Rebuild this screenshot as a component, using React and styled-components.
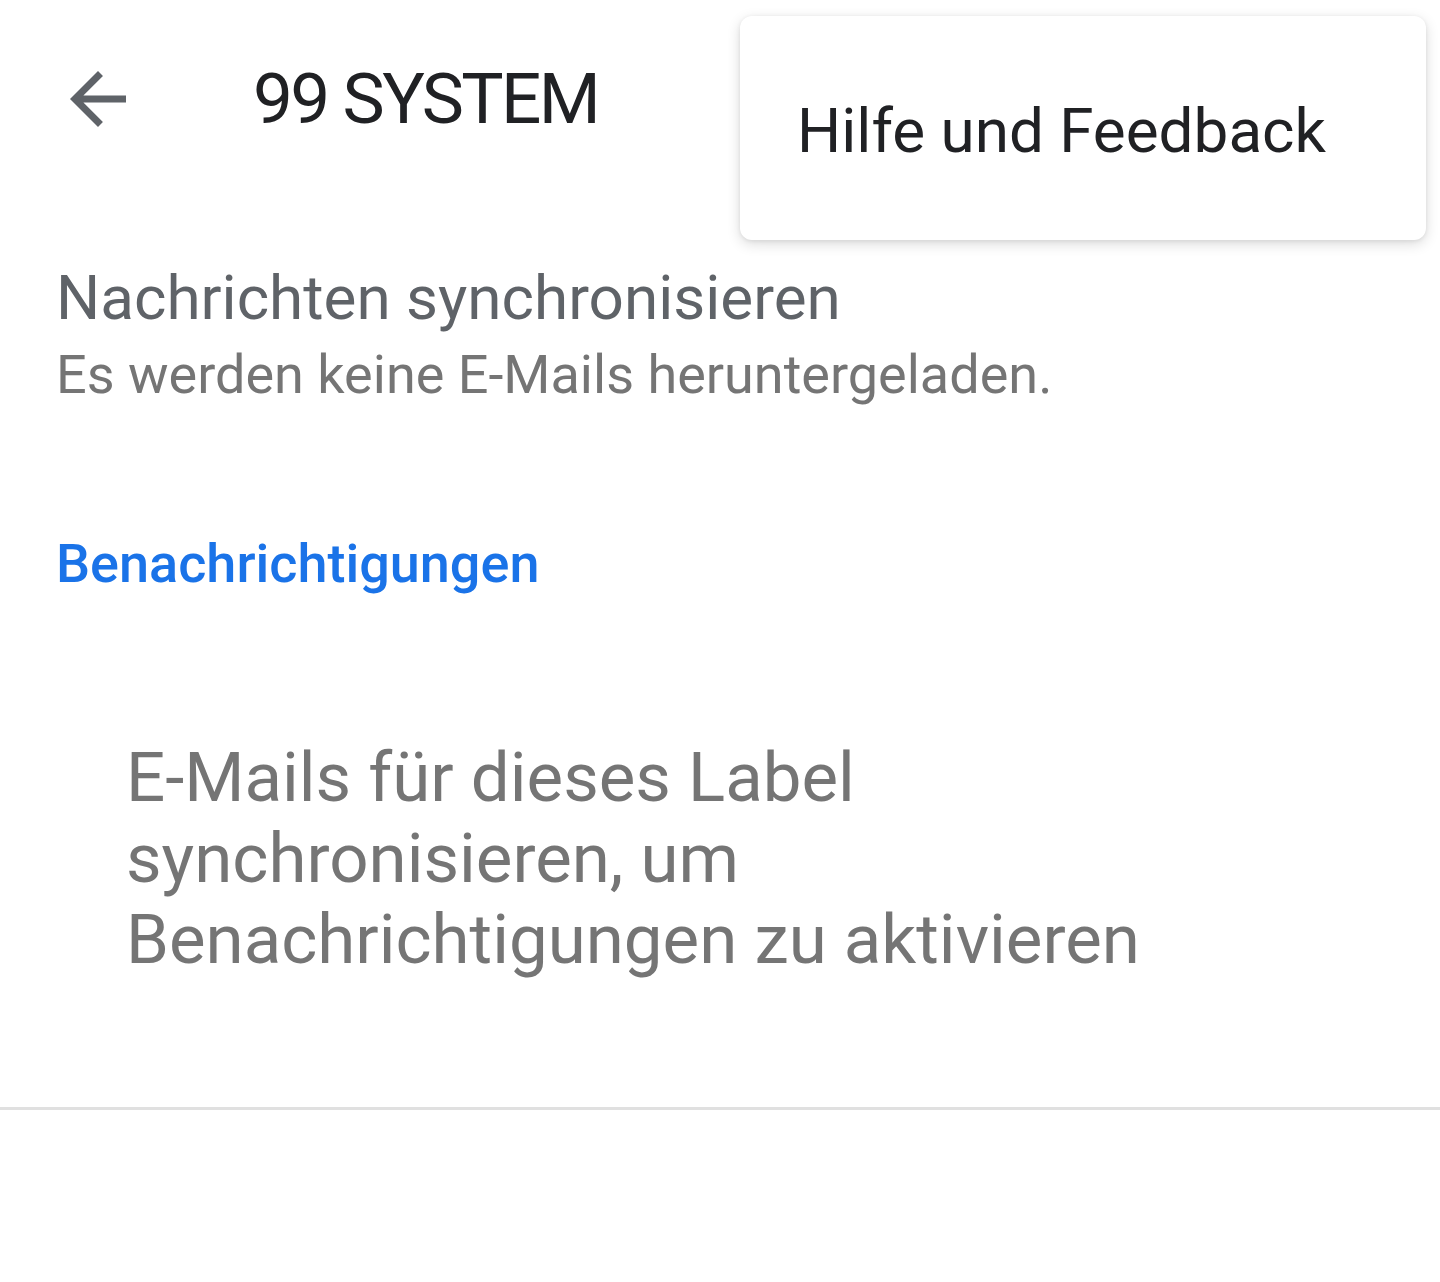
import React from "react";
import styled, { createGlobalStyle } from "styled-components";

const GlobalStyle = createGlobalStyle`
    html, body {
        margin: 0;
        padding: 0;
        background: #ffffff;
    }
    body {
        font-family: Roboto, "Liberation Sans", sans-serif;
        -webkit-font-smoothing: antialiased;
    }
`;

const Screen = styled.div`
    position: relative;
    width: 1440px;
    min-height: 1282px;
    background: #ffffff;
    overflow: hidden;
`;

const AppBar = styled.header`
    height: 198px;
    display: flex;
    align-items: center;
    padding-left: 56px;
`;

const BackButton = styled.button`
    width: 84px;
    height: 84px;
    padding: 0;
    border: none;
    background: none;
    color: #5f6368;
    display: flex;
    align-items: center;
    justify-content: center;
    & > svg {
        width: 84px;
        height: 84px;
        fill: currentColor;
    }
`;

const Title = styled.h1`
    margin: 0 0 0 113px;
    font-family: Roboto, "Open Sans", sans-serif;
    font-size: 71px;
    font-weight: 400;
    line-height: 72px;
    letter-spacing: -2.6px;
    color: #202124;
`;

const OverflowMenu = styled.div`
    position: absolute;
    top: 16px;
    right: 14px;
    width: 686px;
    height: 224px;
    box-sizing: border-box;
    padding: 5px 0 0 57px;
    display: flex;
    align-items: center;
    background: #ffffff;
    border-radius: 12px;
    box-shadow: 0 4px 14px rgba(0, 0, 0, 0.14), 0 1px 4px rgba(0, 0, 0, 0.08);
`;

const MenuItem = styled.div`
    font-size: 62px;
    line-height: 74px;
    color: #202124;
`;

const SettingBlock = styled.section`
    padding: 63px 0 0 56px;
`;

const SettingTitle = styled.div`
    font-size: 62px;
    line-height: 74px;
    color: #5f6368;
`;

const SettingSummary = styled.div`
    margin-top: 8px;
    font-size: 54px;
    line-height: 64px;
    color: #757575;
`;

const CategoryHeader = styled.h2`
    margin: 125px 0 0 56px;
    font-size: 54px;
    font-weight: 500;
    line-height: 64px;
    color: #1a73e8;
`;

const EmptyNote = styled.p`
    margin: 141px 0 0 126px;
    max-width: 1080px;
    font-size: 69px;
    line-height: 81px;
    color: #757575;
`;

const Divider = styled.hr`
    margin: 127px 0 0;
    height: 3px;
    border: none;
    background: #e0e0e0;
`;

export default function App() {
    return (
        <Screen>
            <GlobalStyle />
            <AppBar>
                <BackButton aria-label="Zurück">
                    <svg viewBox="0 0 24 24">
                        <path d="M20 11H7.83l5.59-5.59L12 4l-8 8 8 8 1.41-1.41L7.83 13H20v-2z" />
                    </svg>
                </BackButton>
                <Title>99 SYSTEM</Title>
            </AppBar>
            <OverflowMenu>
                <MenuItem>Hilfe und Feedback</MenuItem>
            </OverflowMenu>
            <SettingBlock>
                <SettingTitle>Nachrichten synchronisieren</SettingTitle>
                <SettingSummary>Es werden keine E-Mails heruntergeladen.</SettingSummary>
            </SettingBlock>
            <CategoryHeader>Benachrichtigungen</CategoryHeader>
            <EmptyNote>
                E-Mails für dieses Label synchronisieren, um Benachrichtigungen zu aktivieren
            </EmptyNote>
            <Divider />
        </Screen>
    );
}
